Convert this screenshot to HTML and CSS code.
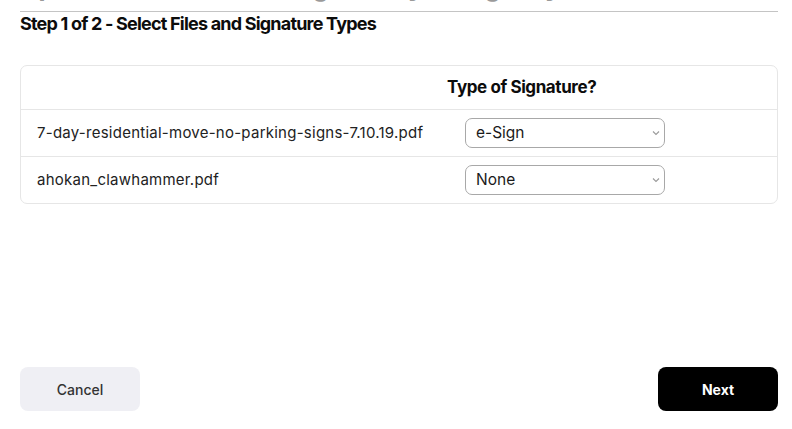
FILE: index.html
```html
<!DOCTYPE html>
<html lang="en">
<head>
<meta charset="utf-8">
<title>Select Files and Signature Types</title>
<link rel="stylesheet" href="styles.css">
</head>
<body>
<div class="page">
  <div class="page-head">
    <h1 class="page-title">Upload Documents to Sign with your agency</h1>
  </div>
  <h2 class="step-title">Step 1 of 2 - Select Files and Signature Types</h2>
  <div class="card">
    <table class="files">
      <colgroup><col class="c1"><col class="c2"></colgroup>
      <thead>
        <tr>
          <th class="col-file"></th>
          <th class="col-type">Type of Signature?</th>
        </tr>
      </thead>
      <tbody>
        <tr>
          <td class="col-file">7-day-residential-move-no-parking-signs-7.10.19.pdf</td>
          <td class="col-type">
            <div class="select-wrap">
              <select class="select"><option>e-Sign</option><option>None</option></select>
              <svg class="chev" width="8" height="6" viewBox="0 0 8 6"><path d="M1 1.5 L4 4.5 L7 1.5" fill="none" stroke="#9a9a9a" stroke-width="1.1"/></svg>
            </div>
          </td>
        </tr>
        <tr>
          <td class="col-file">ahokan_clawhammer.pdf</td>
          <td class="col-type">
            <div class="select-wrap">
              <select class="select"><option>None</option><option>e-Sign</option></select>
              <svg class="chev" width="8" height="6" viewBox="0 0 8 6"><path d="M1 1.5 L4 4.5 L7 1.5" fill="none" stroke="#9a9a9a" stroke-width="1.1"/></svg>
            </div>
          </td>
        </tr>
      </tbody>
    </table>
  </div>
  <div class="actions">
    <button class="btn btn-cancel">Cancel</button>
    <button class="btn btn-next">Next</button>
  </div>
</div>
</body>
</html>
```
FILE: styles.css
```css
* { box-sizing: border-box; }
html, body { margin: 0; padding: 0; background: #fff; }
body {
  font-family: "Inter", "Noto Sans", sans-serif;
  color: #111;
  overflow: hidden;
}
.page {
  height: 429px;
  padding: 0 14px 18px 20px;
  display: flex;
  flex-direction: column;
}
.page-head {
  height: 12px;
  border-bottom: 1px solid #c4c4c4;
  overflow: hidden;
  position: relative;
}
.page-title {
  margin: -29px 0 0 0;
  font-size: 26px;
  line-height: 31px;
  font-weight: 700;
  color: #9a9a9a;
  letter-spacing: -0.5px;
  white-space: nowrap;
}
.step-title {
  margin: 2px 0 0 0;
  font-size: 18px;
  line-height: 20px;
  font-weight: 700;
  letter-spacing: -0.8px;
  color: #0c0c0c;
}
.card {
  margin-top: 31px;
  border: 1px solid #e6e6e6;
  border-radius: 7px;
  overflow: hidden;
}
.files {
  width: 100%;
  border-collapse: collapse;
  table-layout: fixed;
}
.files col.c1 { width: 412px; }
.files th {
  height: 43px;
  text-align: left;
  font-size: 17px;
  font-weight: 700;
  letter-spacing: -0.4px;
  color: #0c0c0c;
  padding: 0 16px 0 14px;
}
.files td {
  height: 47px;
  border-top: 1px solid #e6e6e6;
  padding: 0 0 0 16px;
  font-size: 15px;
  letter-spacing: 0.25px;
  color: #222;
  vertical-align: middle;
  white-space: nowrap;
}
.files td.col-type { padding-left: 32px; letter-spacing: 0; }
.select-wrap {
  position: relative;
  width: 200px;
}
.select {
  appearance: none;
  -webkit-appearance: none;
  width: 200px;
  height: 30px;
  border: 1px solid #a8a8a8;
  border-radius: 7px;
  background: #fff;
  padding: 0 10px;
  font-family: "Inter", "Noto Sans", sans-serif;
  font-size: 15.5px;
  color: #1a1a1a;
}
.chev {
  position: absolute;
  right: 5px;
  top: 12px;
  pointer-events: none;
}
.actions {
  margin-top: auto;
  display: flex;
  justify-content: space-between;
}
.btn {
  width: 120px;
  height: 44px;
  border: none;
  border-radius: 8px;
  font-family: "Inter", "Noto Sans", sans-serif;
  font-size: 14px;
}
.btn-cancel {
  background: #efeff4;
  color: #333;
  font-weight: 500;
}
.btn-next {
  background: #000;
  color: #fff;
  font-weight: 700;
}
```
